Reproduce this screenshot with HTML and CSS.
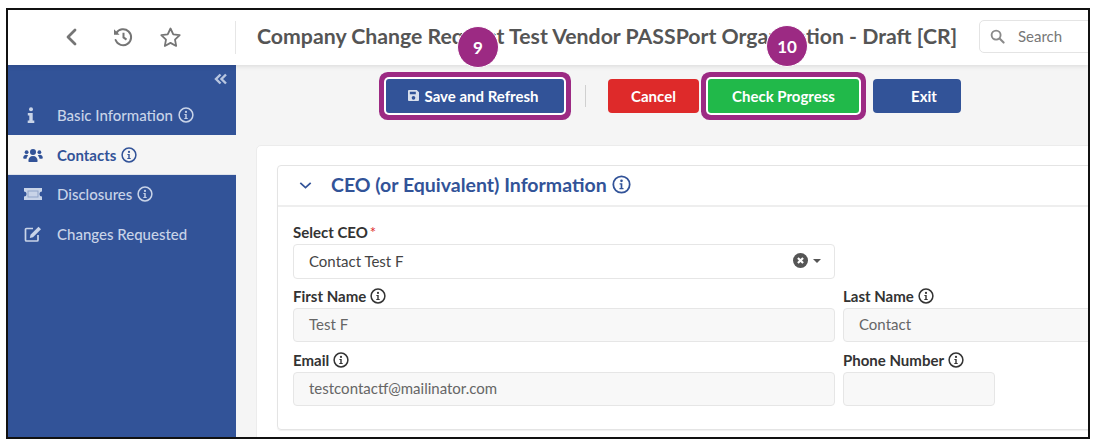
FILE: index.html
```html
<!DOCTYPE html>
<html lang="en">
<head>
<meta charset="utf-8">
<title>Company Change Request</title>
<link rel="stylesheet" href="styles.css">
</head>
<body>
<svg class="defs" width="0" height="0" aria-hidden="true">
  <symbol id="info" viewBox="0 0 16 16">
    <circle cx="8" cy="8" r="6.9" fill="none" stroke="currentColor" stroke-width="1.5"/>
    <circle cx="8" cy="4.9" r="1.1" fill="currentColor"/>
    <path d="M6.4 7h2.3v4h1v1.100H6.300V11h1V8.100h-.9z" fill="currentColor"/>
  </symbol>
</svg>
<div class="frame">
  <header class="topbar">
    <div class="topnav">
      <svg class="ic-back" viewBox="0 0 14 20"><path d="M11 3 4 10l7 7" fill="none" stroke="currentColor" stroke-width="2.8" stroke-linecap="round" stroke-linejoin="round"/></svg>
      <svg class="ic-hist" viewBox="0 0 22 22"><path d="M4.200 7.200A8 8 0 1 1 3.600 14" fill="none" stroke="currentColor" stroke-width="2" stroke-linecap="round"/><path d="M2 3.200v5.600h5.600z" fill="currentColor"/><path d="M11.500 6.800v4.600l3 2.200" fill="none" stroke="currentColor" stroke-width="2"/></svg>
      <svg class="ic-star" viewBox="0 0 24 24"><path d="m12 2.600 2.900 6.100 6.700.9-4.900 4.600 1.200 6.600-5.900-3.200-5.900 3.200 1.200-6.600-4.900-4.600 6.700-.9z" fill="none" stroke="currentColor" stroke-width="1.900" stroke-linejoin="round"/></svg>
    </div>
    <h1 class="title">Company Change Request Test Vendor PASSPort Organization - Draft [CR]</h1>
    <div class="search">
      <svg class="ic-search" viewBox="0 0 16 16"><circle cx="6.500" cy="6.500" r="4.800" fill="none" stroke="currentColor" stroke-width="2"/><path d="m10.200 10.200 4.300 4.300" stroke="currentColor" stroke-width="2.200" stroke-linecap="round"/></svg>
      <span>Search</span>
    </div>
  </header>
  <div class="body">
    <aside class="sidebar">
      <div class="collapse"><svg viewBox="0 0 14 12"><path d="M6.500 1.500 2 6l4.500 4.500M12 1.500 7.500 6l4.500 4.500" fill="none" stroke="currentColor" stroke-width="2.400"/></svg></div>
      <nav class="nav">
        <a class="nav-item">
          <span class="nav-ic"><svg class="ic-i" viewBox="0 0 8 16"><circle cx="4" cy="2.200" r="2" fill="currentColor"/><path d="M.8 6h4.900v7.600h1.600V16H.7v-2.400h1.600V8.400H.8z" fill="currentColor"/></svg></span>
          <span>Basic Information</span><svg class="info"><use href="#info"/></svg>
        </a>
        <a class="nav-item active">
          <span class="nav-ic"><svg class="ic-users" viewBox="0 0 20 14"><circle cx="10" cy="4" r="3" fill="currentColor"/><circle cx="3.600" cy="4.200" r="1.900" fill="currentColor"/><circle cx="16.400" cy="4.200" r="1.900" fill="currentColor"/><path d="M5.400 13c0-3 1.600-5 4.600-5s4.600 2 4.600 5c0 .6-.4 1-1 1H6.400c-.6 0-1-.4-1-1zM.2 10c0-2 1-3.300 3-3.300.9 0 1.500.3 2 .7-1 .9-1.500 2-1.700 3.300H1.200c-.6 0-1-.2-1-.7zM19.800 10c0-2-1-3.300-3-3.300-.9 0-1.500.3-2 .7 1 .9 1.500 2 1.700 3.300h2.300c.6 0 1-.2 1-.7z" fill="currentColor"/></svg></span>
          <span>Contacts</span><svg class="info"><use href="#info"/></svg>
        </a>
        <a class="nav-item nav-low">
          <span class="nav-ic"><svg class="ic-ticket" viewBox="0 0 18 12"><path d="M0 0h18v3.500a2.500 2.500 0 0 0 0 5V12H0V8.500a2.500 2.500 0 0 0 0-5z" fill="currentColor"/><rect x="4" y="3" width="10" height="6" fill="none" stroke="#8fa3c8" stroke-width="1"/></svg></span>
          <span>Disclosures</span><svg class="info"><use href="#info"/></svg>
        </a>
        <a class="nav-item nav-low">
          <span class="nav-ic"><svg class="ic-edit" viewBox="0 0 18 16"><path d="M9 2.500H2.500a1 1 0 0 0-1 1v10.500a1 1 0 0 0 1 1H13a1 1 0 0 0 1-1V9" fill="none" stroke="currentColor" stroke-width="1.700"/><path d="M14.500.8 17 3.300 9 11.300l-3.200.7.700-3.200z" fill="currentColor"/></svg></span>
          <span>Changes Requested</span>
        </a>
      </nav>
    </aside>
    <main class="main">
      <div class="toolbar">
        <button class="btn btn-save ring"><svg class="ic-save" viewBox="0 0 12 12"><path d="M1 0h8.500L12 2.500V11a1 1 0 0 1-1 1H1a1 1 0 0 1-1-1V1a1 1 0 0 1 1-1zm1 1.800v2.700h6.500V1.800zM6 6.500a2 2 0 1 0 0 4 2 2 0 0 0 0-4z" fill="currentColor" fill-rule="evenodd"/></svg>Save and Refresh</button>
        <span class="tool-sep"></span>
        <button class="btn btn-cancel">Cancel</button>
        <button class="btn btn-check ring">Check Progress</button>
        <button class="btn btn-exit">Exit</button>
      </div>
      <section class="card">
        <div class="panel">
          <div class="panel-head">
            <svg class="ic-chev" viewBox="0 0 12 8"><path d="m1.200 1.500 4.800 4.500 4.800-4.500" fill="none" stroke="currentColor" stroke-width="1.600"/></svg>
            <h2>CEO (or Equivalent) Information</h2>
            <svg class="info info-lg"><use href="#info"/></svg>
          </div>
          <div class="form">
            <div class="field field-select">
              <label>Select CEO<span class="req">*</span></label>
              <div class="control select">
                <span>Contact Test F</span>
                <span class="select-ic">
                  <svg class="ic-clear" viewBox="0 0 14 14"><circle cx="7" cy="7" r="7" fill="currentColor"/><path d="m4.600 4.600 4.800 4.800m0-4.800-4.800 4.800" stroke="#fff" stroke-width="2"/></svg>
                  <i class="caret"></i>
                </span>
              </div>
            </div>
            <div class="field">
              <label>First Name<svg class="info"><use href="#info"/></svg></label>
              <div class="control readonly">Test F</div>
            </div>
            <div class="field">
              <label>Last Name<svg class="info"><use href="#info"/></svg></label>
              <div class="control readonly">Contact</div>
            </div>
            <div class="field">
              <label>Email<svg class="info"><use href="#info"/></svg></label>
              <div class="control readonly">testcontactf@mailinator.com</div>
            </div>
            <div class="field field-phone">
              <label>Phone Number<svg class="info"><use href="#info"/></svg></label>
              <div class="control readonly"></div>
            </div>
          </div>
        </div>
      </section>
    </main>
  </div>
  <span class="callout callout-9">9</span>
  <span class="callout callout-10">10</span>
</div>
</body>
</html>
```
FILE: styles.css
```css
* { box-sizing: border-box; }
html, body { margin: 0; padding: 0; background: #fff; }
body { height: 447px; overflow: hidden; padding: 8px 0 0 6px; font-family: Lato, "Noto Sans", sans-serif; color: #333; }
.defs { position: absolute; }

.frame {
  position: relative;
  width: 1084px;
  height: 431px;
  border: 2px solid #111;
  overflow: hidden;
  display: flex;
  flex-direction: column;
  background: #fff;
}

.topbar {
  flex: none;
  height: 55px;
  display: flex;
  align-items: center;
  background: #fff;
  box-shadow: 0 1px 5px rgba(0,0,0,.12);
  position: relative;
  z-index: 1;
}
.topnav {
  width: 228px;
  height: 33px;
  flex: none;
  border-right: 1px solid #e6e6e6;
  display: flex;
  align-items: center;
  color: #757575;
  padding-left: 56px;
  margin-top: -1px;
}
.ic-back { width: 14px; height: 20px; margin-right: 34px; }
.ic-hist { width: 22px; height: 22px; margin-right: 25px; }
.ic-star { width: 23px; height: 23px; }
.title {
  margin: 0 0 3px 21px;
  flex: none;
  width: 722px;
  font-size: 21.250px;
  font-weight: 700;
  line-height: 32px;
  color: #555;
  white-space: nowrap;
}
.search {
  flex: none;
  width: 130px;
  height: 33px;
  margin-bottom: 3px;
  border: 1px solid #e4e4e4;
  border-radius: 5px;
  display: flex;
  align-items: center;
  padding-left: 10px;
  gap: 13px;
  font-size: 15px;
  color: #777;
}
.ic-search { width: 15px; height: 15px; color: #8a8a8a; }

.body { flex: 1; min-height: 0; display: flex; }

.sidebar { flex: none; width: 228px; background: #325398; color: #c9d4e8; }
.collapse { height: 30px; padding: 8px 8px 0 0; display: flex; justify-content: flex-end; }
.collapse svg { width: 14px; height: 12px; color: #b8c6e0; }
.nav-item {
  display: flex;
  align-items: center;
  height: 40px;
  font-size: 15px;
  font-weight: 500;
  color: #c9d4e8;
}
.nav-item .info { margin-left: 5px; }
.nav-item.active { background: #f5f5f5; color: #325398; font-weight: 700; border-bottom: 1px solid #dfe3ea; }
.nav-low { padding-bottom: 2px; }
.nav-ic { width: 49px; flex: none; display: flex; justify-content: center; }
.ic-i { width: 8px; height: 16px; margin-right: 3px; }
.ic-users { width: 20px; height: 14px; }
.ic-ticket { width: 18px; height: 12px; }
.ic-edit { width: 18px; height: 16px; }
.info { width: 16px; height: 16px; flex: none; color: currentColor; }

.main { flex: 1; min-width: 0; background: #f5f5f5; overflow: hidden; }
.toolbar { display: flex; align-items: center; height: 80px; padding: 0 0 19px 150px; }
.btn {
  height: 34px;
  border: 0;
  border-radius: 4px;
  font-family: inherit;
  font-size: 15px;
  font-weight: 700;
  color: #fff;
  display: flex;
  align-items: center;
  justify-content: center;
}
.ring { box-shadow: 0 0 0 2px #fff, 0 0 0 7px #9c2a83; }
.btn-save { width: 178px; padding-right: 10px; background: #325398; border-radius: 3px; }
.ic-save { width: 11px; height: 11px; margin-right: 6px; color: #d8dfec; }
.tool-sep { width: 1px; height: 22px; background: #d0d0d0; margin: 0 22px 0 21px; }
.btn-cancel { width: 91px; background: #de2a2a; }
.btn-check { width: 151px; margin-left: 9px; background: #21b94a; border-radius: 3px; }
.btn-exit { width: 88px; margin-left: 14px; padding-left: 20px; background: #325398; }

.card {
  margin-left: 20px;
  width: 900px;
  height: 320px;
  padding: 19px 0 0 20px;
  background: #fff;
  border: 1px solid #ececec;
  border-radius: 5px 0 0 0;
}
.panel {
  width: 900px;
  height: 265px;
  border: 1px solid #e4e4e4;
  border-radius: 4px;
  box-shadow: 0 1px 1px rgba(0,0,0,.06);
}
.panel-head {
  height: 41px;
  display: flex;
  align-items: center;
  border-bottom: 2px solid #eee;
  padding-left: 21px;
  color: #325398;
}
.ic-chev { width: 13px; height: 9px; margin-right: 19px; }
.panel-head h2 { margin: 0 0 2px; font-size: 19.500px; font-weight: 700; line-height: 28px; }
.info-lg { width: 19px; height: 19px; margin: 0 0 2px 5px; }

.form {
  display: grid;
  grid-template-columns: 542px 400px;
  column-gap: 8px;
  padding: 15px 0 0 15px;
}
.field { display: flex; flex-direction: column; }
.field-select { grid-column: 1 / -1; width: 542px; }
.field-phone { width: 152px; }
label {
  display: flex;
  align-items: center;
  height: 22px;
  padding-bottom: 2px;
  font-size: 15px;
  font-weight: 700;
  color: #333;
  white-space: nowrap;
}
label .info { margin-left: 4px; }
.req { color: #de2a2a; font-size: 15px; font-weight: 400; margin-left: 2px; }
.control {
  height: 34px;
  border: 1px solid #e6e6e6;
  border-radius: 4px;
  padding: 0 15px 2px;
  font-size: 15px;
  display: flex;
  align-items: center;
  margin-bottom: 8px;
}
.select { height: 35px; margin-bottom: 7px; justify-content: space-between; background: #fff; color: #444; }
.readonly { background: #f8f8f8; color: #666; }
.select-ic { display: flex; align-items: center; gap: 5px; margin-right: -2px; color: #555; }
.ic-clear { width: 15px; height: 15px; }
.caret { width: 0; height: 0; border: 4px solid transparent; border-top-color: #555; border-bottom: 0; }

.callout {
  position: absolute;
  z-index: 2;
  width: 42px;
  height: 42px;
  border-radius: 50%;
  background: #9c2a83;
  border: 1px solid #fff;
  color: #fff;
  font-size: 17px;
  font-weight: 700;
  font-variant-numeric: lining-nums;
  display: flex;
  align-items: center;
  justify-content: center;
}
.callout-9 { left: 449px; top: 16px; }
.callout-10 { left: 758px; top: 15px; }
```
